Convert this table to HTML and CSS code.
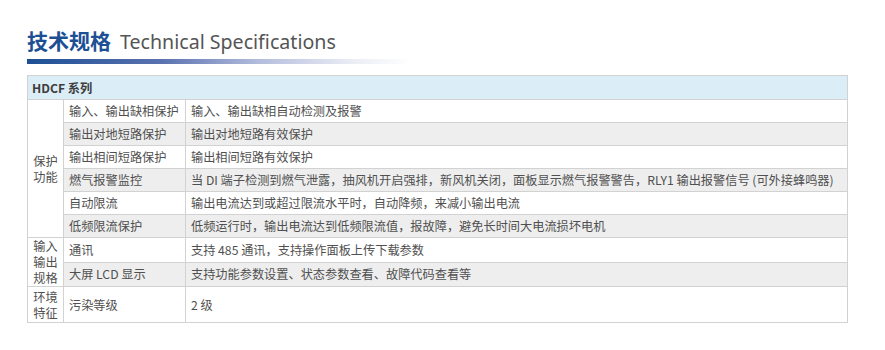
FILE: index.html
```html
<!DOCTYPE html>
<html lang="zh">
<head>
<meta charset="utf-8">
<link rel="stylesheet" href="styles.css">
</head>
<body>
<div class="page">
  <h1 class="title"><span class="zh">技术规格</span><span class="en">Technical Specifications</span></h1>
  <div class="bar"></div>
  <table class="spec">
    <colgroup><col class="c1"><col class="c2"><col class="c3"></colgroup>
    <tr class="head"><td colspan="3">HDCF 系列</td></tr>
    <tr><td class="grp" rowspan="6">保护<br>功能</td><td>输入、输出缺相保护</td><td>输入、输出缺相自动检测及报警</td></tr>
    <tr class="alt"><td>输出对地短路保护</td><td>输出对地短路有效保护</td></tr>
    <tr><td>输出相间短路保护</td><td>输出相间短路有效保护</td></tr>
    <tr class="alt"><td>燃气报警监控</td><td>当 DI 端子检测到燃气泄露，抽风机开启强排，新风机关闭，面板显示燃气报警警告，RLY1 输出报警信号 (可外接蜂鸣器)</td></tr>
    <tr><td>自动限流</td><td>输出电流达到或超过限流水平时，自动降频，来减小输出电流</td></tr>
    <tr class="alt"><td>低频限流保护</td><td>低频运行时，输出电流达到低频限流值，报故障，避免长时间大电流损坏电机</td></tr>
    <tr><td class="grp" rowspan="2">输入<br>输出<br>规格</td><td>通讯</td><td>支持 485 通讯，支持操作面板上传下载参数</td></tr>
    <tr class="alt"><td>大屏 LCD 显示</td><td>支持功能参数设置、状态参数查看、故障代码查看等</td></tr>
    <tr class="last"><td class="grp">环境<br>特征</td><td>污染等级</td><td>2 级</td></tr>
  </table>
</div>
</body>
</html>
```
FILE: styles.css
```css
html, body {
  margin: 0;
  padding: 0;
  background: #ffffff;
}
.page {
  padding: 27px 0 0 27px;
  font-family: "Noto Sans CJK SC", "Noto Sans", sans-serif;
}
.title {
  margin: 0;
  height: 26px;
  line-height: 26px;
  display: flex;
  align-items: baseline;
  white-space: nowrap;
}
.title .zh {
  font-size: 21px;
  font-weight: 700;
  color: #1d4f95;
}
.title .en {
  margin-left: 9px;
  font-family: "Noto Sans", "Open Sans", sans-serif;
  font-size: 19.6px;
  font-weight: 400;
  color: #555555;
}
.bar {
  margin-top: 6px;
  width: 385px;
  height: 5px;
  background: linear-gradient(to right, #1d4f95 0%, #5a72b0 35%, #b3bcdc 60%, #eceef6 85%, #ffffff 100%);
}
.spec {
  margin-top: 11px;
  width: 821px;
  border-collapse: collapse;
  table-layout: fixed;
  font-size: 12.2px;
  color: #505050;
}
.spec col.c1 { width: 36px; }
.spec col.c2 { width: 122px; }
.spec td {
  border: 1px solid #d2d2d2;
  height: 22px;
  padding: 0 0 0 5px;
  line-height: 16px;
  white-space: nowrap;
  vertical-align: middle;
}
.spec tr.head td {
  background: #dbedf7;
  font-weight: 700;
  color: #3c3c3c;
  padding-left: 4px;
  height: 23px;
}
.spec tr.alt td {
  background: #eeeeee;
}
.spec td.grp {
  background: #ffffff;
  padding: 0;
  text-align: center;
}
.spec tr.last td {
  height: 35px;
}
```
